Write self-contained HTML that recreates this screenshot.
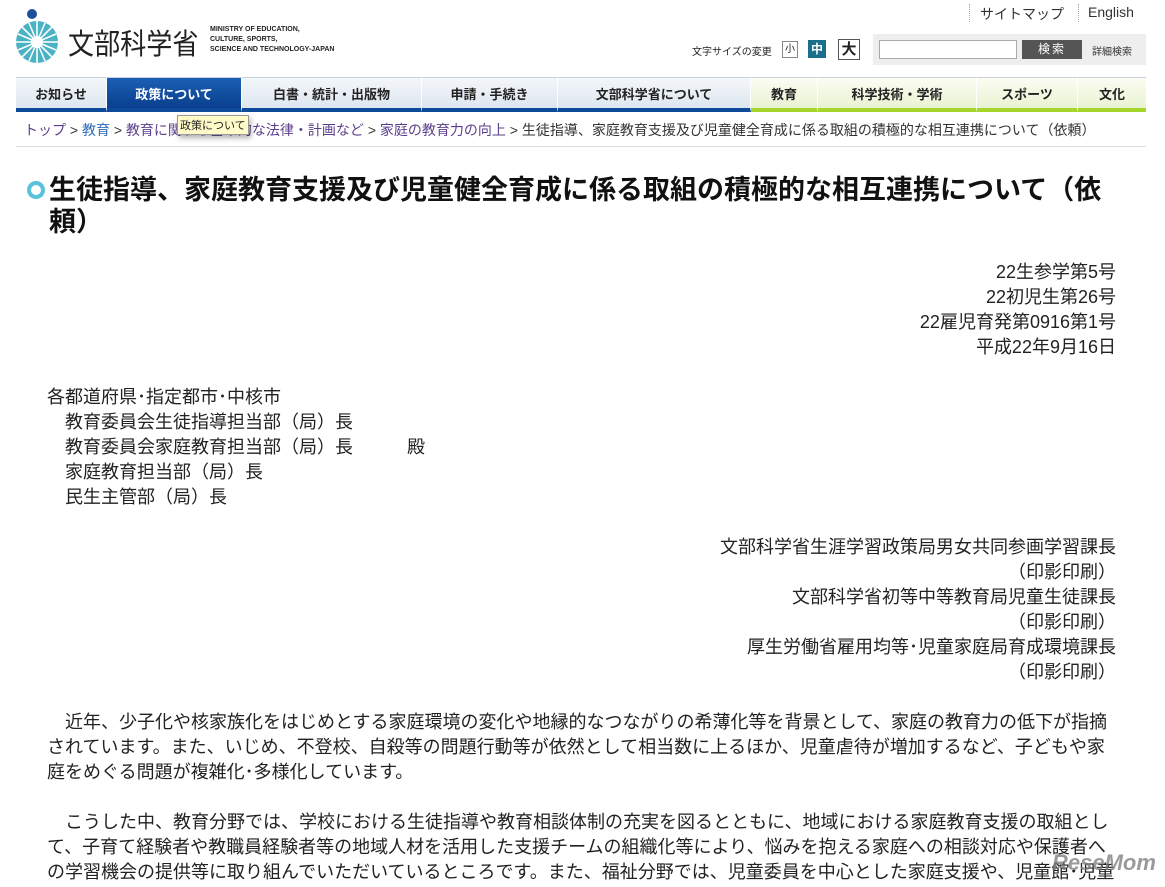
<!DOCTYPE html>
<html><head><meta charset="utf-8"><style>
body{margin:0;width:1165px;height:887px;overflow:hidden;background:#fff;font-family:"Liberation Sans","Noto Sans CJK JP",sans-serif;color:#222;position:relative}
.a{position:absolute;white-space:nowrap}
.nav{position:absolute;top:77px;left:16px;width:1130px;height:34px;display:flex}
.nav div{height:30px;border-bottom:4px solid #0d4a9a;border-right:1px solid #fff;background:linear-gradient(#f4f7fb,#dde6ef);font-size:13px;font-weight:bold;display:flex;align-items:center;justify-content:center;box-sizing:content-box;border-top:1px solid #c8d2dc}
.nav div.g{border-bottom-color:#a6d62c;background:linear-gradient(#fbfdf3,#e9f3d2)}
.nav div.s{background:linear-gradient(#1a5fb4,#0a3f8e);color:#fff}
.bc{font-size:14px;color:#5a3f8c}
.t{font-size:18px;line-height:25px}
</style></head><body>
<svg class="a" style="left:14px;top:6px" width="48" height="58" viewBox="0 0 48 58">
<circle cx="18" cy="8" r="5" fill="#1d4f9a"/>
<circle cx="23" cy="36" r="21" fill="#49b3c3"/>
<g stroke="#fff" stroke-width="1.6">
<line x1="23" y1="15" x2="23" y2="57"/><line x1="2" y1="36" x2="44" y2="36"/>
<line x1="8" y1="21" x2="38" y2="51"/><line x1="38" y1="21" x2="8" y2="51"/>
<line x1="15" y1="17" x2="31" y2="55"/><line x1="31" y1="17" x2="15" y2="55"/>
<line x1="4" y1="28" x2="42" y2="44"/><line x1="42" y1="28" x2="4" y2="44"/></g>
<circle cx="23" cy="36" r="6" fill="#fff"/></svg>
<div class="a" style="left:68px;top:21px;font-size:29px;color:#222;transform:scaleX(.9);transform-origin:left top">文部科学省</div>
<div class="a" style="left:210px;top:25px;font-size:7px;font-weight:bold;line-height:10px;color:#222">MINISTRY OF EDUCATION,<br>CULTURE, SPORTS,<br>SCIENCE AND TECHNOLOGY-JAPAN</div>
<div class="a" style="left:969px;top:4px;height:18px;border-left:1px dotted #aaa"></div>
<div class="a" style="left:980px;top:4px;font-size:14px;color:#333">サイトマップ</div>
<div class="a" style="left:1078px;top:4px;height:18px;border-left:1px dotted #aaa"></div>
<div class="a" style="left:1088px;top:4px;font-size:14px;color:#333">English</div>
<div class="a" style="left:692px;top:43px;font-size:10px">文字サイズの変更</div>
<div class="a" style="left:782px;top:41px;width:14px;height:15px;border:1px solid #888;font-size:10px;text-align:center;line-height:15px">小</div>
<div class="a" style="left:808px;top:40px;width:18px;height:18px;background:#1b6f8a;color:#fff;font-size:12px;font-weight:bold;text-align:center;line-height:18px">中</div>
<div class="a" style="left:838px;top:39px;width:20px;height:19px;border:1px solid #555;font-size:15px;font-weight:bold;text-align:center;line-height:19px">大</div>
<div class="a" style="left:873px;top:34px;width:273px;height:31px;background:#eee"></div>
<div class="a" style="left:879px;top:40px;width:136px;height:17px;border:1px solid #aaa;background:#fff"></div>
<div class="a" style="left:1022px;top:40px;width:60px;height:19px;background:#555;color:#fff;font-size:12px;text-align:center;line-height:19px;letter-spacing:2px">検索</div>
<div class="a" style="left:1092px;top:43px;font-size:10px;color:#333">詳細検索</div>
<div class="nav">
<div style="width:90px">お知らせ</div><div class="s" style="width:134px">政策について</div><div style="width:179px">白書・統計・出版物</div><div style="width:135px">申請・手続き</div><div style="width:192px">文部科学省について</div><div class="g" style="width:66px">教育</div><div class="g" style="width:158px">科学技術・学術</div><div class="g" style="width:100px">スポーツ</div><div class="g" style="width:68px;border-right:0">文化</div>
</div>
<div class="a bc" style="left:24px;top:120px"><span style="color:#5a3f8c">トップ</span> <span style="color:#333">&gt;</span> <span style="color:#2a6ab8">教育</span> <span style="color:#333">&gt;</span> 教育に関する基本的な法律・計画など <span style="color:#333">&gt;</span> 家庭の教育力の向上 <span style="color:#333">&gt;</span> <span style="color:#333">生徒指導、家庭教育支援及び児童健全育成に係る取組の積極的な相互連携について（依頼）</span></div>
<div class="a" style="left:177px;top:115px;background:#fffbc8;border:1px solid #999;font-size:11px;padding:1px 2px;box-shadow:2px 3px 5px rgba(0,0,0,.3)">政策について</div>
<div class="a" style="left:16px;top:146px;width:1130px;border-top:1px solid #ddd"></div>
<div class="a" style="left:27px;top:181px;width:10px;height:10px;border-radius:50%;border:4px solid #5bc2dc;background:#fff"></div>
<div class="a" style="left:49px;top:174px;width:1080px;white-space:normal;font-size:27px;font-weight:bold;line-height:32px;color:#111">生徒指導、家庭教育支援及び児童健全育成に係る取組の積極的な相互連携について（依頼）</div>
<div class="a t" style="right:49px;top:260px;text-align:right">22生参学第5号<br>22初児生第26号<br>22雇児育発第0916第1号<br>平成22年9月16日</div>
<div class="a t" style="left:47px;top:385px">各都道府県･指定都市･中核市<br>　教育委員会生徒指導担当部（局）長<br>　教育委員会家庭教育担当部（局）長　　　殿<br>　家庭教育担当部（局）長<br>　民生主管部（局）長</div>
<div class="a t" style="right:49px;top:535px;text-align:right">文部科学省生涯学習政策局男女共同参画学習課長<br>（印影印刷）<br>文部科学省初等中等教育局児童生徒課長<br>（印影印刷）<br>厚生労働省雇用均等･児童家庭局育成環境課長<br>（印影印刷）</div>
<div class="a t" style="left:47px;top:710px;width:1075px;white-space:normal">　近年、少子化や核家族化をはじめとする家庭環境の変化や地縁的なつながりの希薄化等を背景として、家庭の教育力の低下が指摘されています。また、いじめ、不登校、自殺等の問題行動等が依然として相当数に上るほか、児童虐待が増加するなど、子どもや家庭をめぐる問題が複雑化･多様化しています。<br><br>　こうした中、教育分野では、学校における生徒指導や教育相談体制の充実を図るとともに、地域における家庭教育支援の取組として、子育て経験者や教職員経験者等の地域人材を活用した支援チームの組織化等により、悩みを抱える家庭への相談対応や保護者への学習機会の提供等に取り組んでいただいているところです。また、福祉分野では、児童委員を中心とした家庭支援や、児童館･児童</div>
<div class="a" style="left:1052px;top:850px;font-size:22px;font-weight:bold;color:rgba(120,120,120,.75);font-style:italic">ReseMom</div>
</body></html>
